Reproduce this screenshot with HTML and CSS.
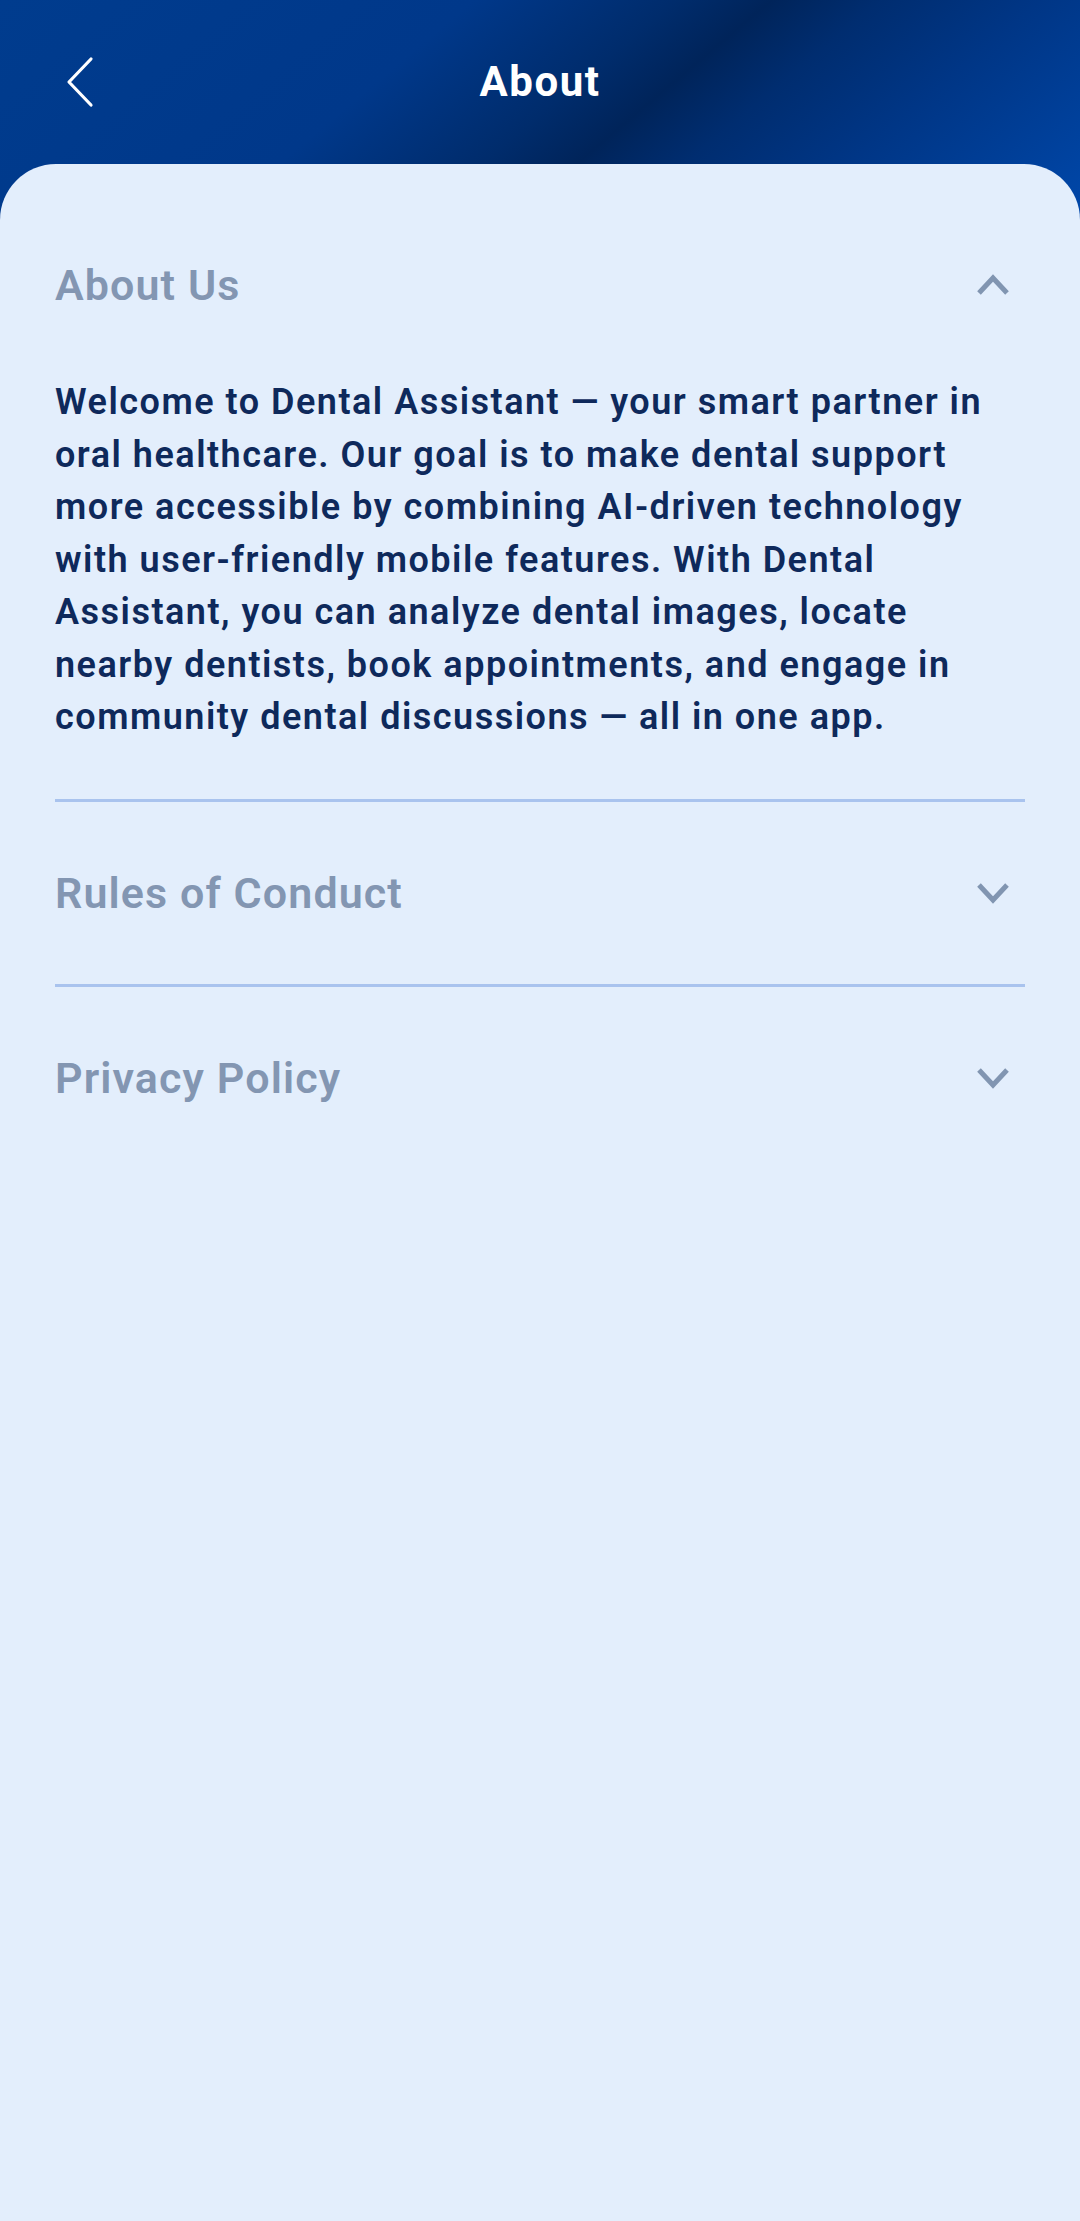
FILE: index.html
```html
<!DOCTYPE html>
<html lang="en">
<head>
<meta charset="utf-8">
<title>About</title>
<link rel="stylesheet" href="styles.css">
</head>
<body>
<div class="page">
  <header class="topbar">
    <div class="back">
      <svg width="30" height="52" viewBox="0 0 30 52" aria-hidden="true">
        <path d="M25 3 L3 26 L25 49" fill="none" stroke="#ffffff" stroke-width="3.2" stroke-linecap="round" stroke-linejoin="round"/>
      </svg>
    </div>
    <h1 class="title">About</h1>
    <div class="spacer"></div>
  </header>

  <main class="card">
    <section class="acc">
      <div class="acc-head">
        <span class="acc-title">About Us</span>
        <svg class="chev" width="36" height="24" viewBox="0 0 36 24" aria-hidden="true">
          <path d="M4 20 L18 5 L32 20" fill="none" stroke="#8195b1" stroke-width="5"/>
        </svg>
      </div>
      <p class="acc-body">Welcome to Dental Assistant — your smart partner in oral healthcare. Our goal is to make dental support more accessible by combining AI-driven technology with user-friendly mobile features. With Dental Assistant, you can analyze dental images, locate nearby dentists, book appointments, and engage in community dental discussions — all in one app.</p>
    </section>
    <hr class="divider">
    <section class="acc">
      <div class="acc-head">
        <span class="acc-title">Rules of Conduct</span>
        <svg class="chev" width="36" height="24" viewBox="0 0 36 24" aria-hidden="true">
          <path d="M4 4 L18 19 L32 4" fill="none" stroke="#8195b1" stroke-width="5"/>
        </svg>
      </div>
    </section>
    <hr class="divider">
    <section class="acc">
      <div class="acc-head">
        <span class="acc-title">Privacy Policy</span>
        <svg class="chev" width="36" height="24" viewBox="0 0 36 24" aria-hidden="true">
          <path d="M4 4 L18 19 L32 4" fill="none" stroke="#8195b1" stroke-width="5"/>
        </svg>
      </div>
    </section>
  </main>
</div>
</body>
</html>
```

FILE: styles.css
```css
* { box-sizing: border-box; }

html, body {
  margin: 0;
  padding: 0;
  background: #e3eefc;
  font-family: Roboto, "Noto Sans", "Liberation Sans", sans-serif;
}

.page {
  min-height: 2221px;
  display: flex;
  flex-direction: column;
  background:
    linear-gradient(140deg, #003c8e 0%, #00388a 35%, #002c6c 50%, #00245a 57%, #002d70 65%, #003686 77%, #0048ab 100%) top left / 100% 230px no-repeat,
    #e3eefc;
}

.topbar {
  height: 164px;
  display: grid;
  grid-template-columns: 1fr auto 1fr;
  align-items: center;
}

.back {
  padding-left: 66px;
  display: flex;
  align-items: center;
}

.back svg { display: block; }

.title {
  margin: 0;
  color: #ffffff;
  font-size: 42px;
  font-weight: 700;
  letter-spacing: 1.5px;
  line-height: 1;
}

.card {
  flex: 1;
  background: #e3eefc;
  border-radius: 56px 56px 0 0;
  padding: 30px 55px 0;
}

.acc-head {
  height: 182px;
  display: flex;
  align-items: center;
  justify-content: space-between;
}

.acc-title {
  color: #8396b2;
  font-size: 43px;
  font-weight: 600;
  letter-spacing: 1.1px;
}

.chev {
  display: block;
  margin-right: 14px;
}

.acc-body {
  margin: 0 0 55px;
  color: #0e295b;
  font-size: 36px;
  font-weight: 600;
  line-height: 52.5px;
  letter-spacing: 1.5px;
}

.divider {
  margin: 0;
  border: 0;
  height: 3px;
  background: #a9c3ee;
}
```
